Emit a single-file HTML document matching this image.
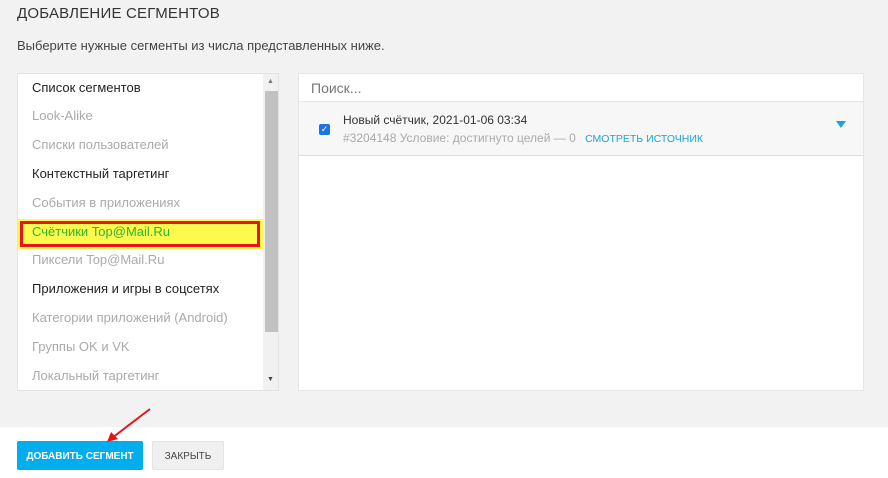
<!DOCTYPE html>
<html><head><meta charset="utf-8"><style>
*{margin:0;padding:0;box-sizing:border-box}
body{width:888px;height:478px;background:#fff;font-family:"Liberation Sans",sans-serif;position:relative;overflow:hidden}
.top{position:absolute;left:0;top:0;width:888px;height:427px;background:#f2f2f2}
.abs{position:absolute;white-space:nowrap}
h1{position:absolute;left:17px;top:5px;font-size:15px;font-weight:normal;color:#333;letter-spacing:.2px}
.sub{left:17px;top:38px;font-size:13px;color:#444}
.list{position:absolute;left:17px;top:73px;width:262px;height:318px;background:#fff;border:1px solid #e3e3e3;overflow:hidden}
.list div{position:absolute;left:14px;font-size:13px}
.sb{position:absolute;left:245px;top:0;width:16px;height:318px;background:#f1f1f1}
.thumb{position:absolute;left:247px;top:17px;width:13px;height:241px;background:#c1c1c1}
.right{position:absolute;left:298px;top:73px;width:566px;height:318px;background:#fff;border:1px solid #e6e6e6}
.btn{position:absolute;top:441px;height:29px;font-size:10px;display:flex;align-items:center;justify-content:center;border-radius:2px;padding-top:1px}
</style></head><body>
<div class="top"></div>
<h1>ДОБАВЛЕНИЕ СЕГМЕНТОВ</h1>
<div class="abs sub">Выберите нужные сегменты из числа представленных ниже.</div>
<div class="list">
<div style="top:6px;color:#222">Список сегментов</div>
<div style="top:34px;color:#aaa">Look-Alike</div>
<div style="top:63px;color:#aaa">Списки пользователей</div>
<div style="top:92px;color:#222">Контекстный таргетинг</div>
<div style="top:121px;color:#aaa">События в приложениях</div>
<div style="left:0;top:145px;width:245px;height:30px;background:#fdfa4d"></div>
<div style="left:2px;top:147px;width:240px;height:26px;border:3px solid #e8141b"></div>
<div style="top:150px;color:#2db52d">Счётчики Top@Mail.Ru</div>
<div style="top:178px;color:#aaa">Пиксели Top@Mail.Ru</div>
<div style="top:207px;color:#222">Приложения и игры в соцсетях</div>
<div style="top:236px;color:#aaa">Категории приложений (Android)</div>
<div style="top:265px;color:#aaa">Группы OK и VK</div>
<div style="top:294px;color:#aaa">Локальный таргетинг</div>
<div class="sb" style="left:245px;top:0"></div>
<div class="thumb" style="left:247px;top:17px"></div>
<div style="left:249px;top:4px;font-size:7px;color:#777">▲</div>
<div style="left:249px;top:302px;font-size:7px;color:#444">▼</div>
</div>
<div class="right">
<div class="abs" style="left:12px;top:6px;font-size:14px;color:#777">Поиск...</div>
<div class="abs" style="left:0;top:27px;width:564px;height:55px;background:#f7f7f7;border-top:1px solid #e6e6e6;border-bottom:1px solid #ddd"></div>
<div class="abs" style="left:20px;top:50px;width:11px;height:11px;background:#1a73e8;border-radius:2px;color:#fff;font-size:9px;line-height:11px;text-align:center">✓</div>
<div class="abs" style="left:44px;top:39px;font-size:12px;color:#333">Новый счётчик, 2021-01-06 03:34</div>
<div class="abs" style="left:44px;top:57px;font-size:12px;color:#aaa">#3204148 Условие: достигнуто целей — 0 <span style="color:#1aa3e0;font-size:10.5px;margin-left:6px">СМОТРЕТЬ ИСТОЧНИК</span></div>
<div class="abs" style="left:537px;top:47px;width:0;height:0;border-left:5px solid transparent;border-right:5px solid transparent;border-top:7px solid #1aa3e0"></div>
</div>
<div class="btn" style="left:17px;width:126px;background:#00aeef;color:#fff;font-weight:bold">ДОБАВИТЬ СЕГМЕНТ</div>
<div class="btn" style="left:152px;width:72px;background:#f0f0f0;color:#444;border:1px solid #e4e4e4">ЗАКРЫТЬ</div>
<svg class="abs" style="left:100px;top:405px" width="55" height="40"><line x1="50" y1="4" x2="12" y2="33" stroke="#e8141b" stroke-width="2"/><polygon points="7,37 11,27 18,34" fill="#e8141b"/></svg>
</body></html>
